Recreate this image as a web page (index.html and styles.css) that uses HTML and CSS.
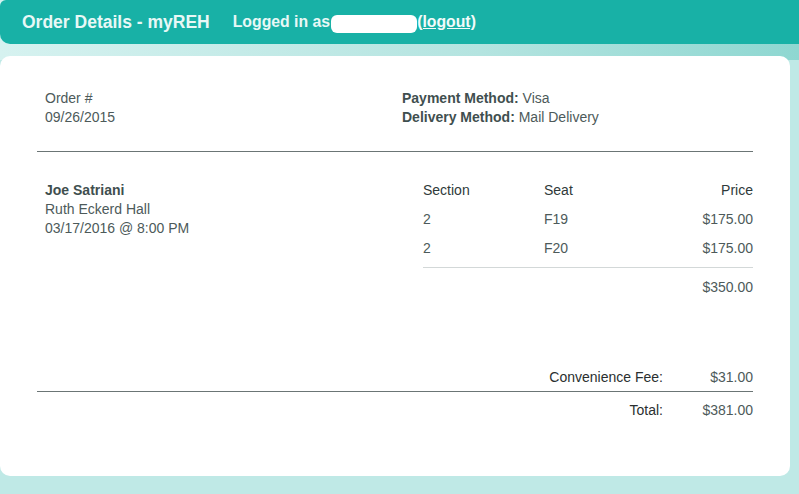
FILE: index.html
```html
<!DOCTYPE html>
<html>
<head>
<meta charset="utf-8">
<title>Order Details - myREH</title>
<link rel="stylesheet" href="styles.css">
</head>
<body>
<div class="page">
  <header class="topbar">
    <span class="title">Order Details - myREH</span>
    <span class="login">Logged in as<span class="redact"></span><a href="#" class="logout">(logout)</a></span>
  </header>
  <main class="card">
    <section class="summary">
      <div class="order-info">
        <div>Order #<span class="order-num"></span></div>
        <div>09/26/2015</div>
      </div>
      <div class="methods">
        <div><b>Payment Method:</b> Visa</div>
        <div><b>Delivery Method:</b> Mail Delivery</div>
      </div>
    </section>
    <hr class="rule">
    <section class="event">
      <div class="event-info">
        <div class="artist">Joe Satriani</div>
        <div>Ruth Eckerd Hall</div>
        <div>03/17/2016 @ 8:00 PM</div>
      </div>
      <div class="tickets">
        <div class="trow thead"><span>Section</span><span>Seat</span><span class="price">Price</span></div>
        <div class="trow"><span>2</span><span>F19</span><span class="price">$175.00</span></div>
        <div class="trow"><span>2</span><span>F20</span><span class="price">$175.00</span></div>
        <div class="subtotal">$350.00</div>
      </div>
    </section>
    <section class="totals">
      <div class="fee-row"><span class="label">Convenience Fee:</span><span class="amount">$31.00</span></div>
      <hr class="rule total-rule">
      <div class="total-row"><span class="label">Total:</span><span class="amount">$381.00</span></div>
    </section>
  </main>
</div>
</body>
</html>
```
FILE: styles.css
```css
html, body {
  margin: 0;
  padding: 0;
}
body {
  background: #bfe9e6;
  font-family: "Liberation Sans", Arial, sans-serif;
  width: 799px;
  height: 494px;
  overflow: hidden;
}
.page {
  background: linear-gradient(90deg, #d6f2f0 0%, #b4e4e0 60%, #8ed7d1 100%) top / 100% 60px no-repeat, #bfe9e6;
  height: 494px;
}
.topbar {
  height: 44px;
  background: #18b1a6;
  border-radius: 6px 0 0 10px;
  display: flex;
  align-items: center;
  padding-left: 22px;
  color: #e8f8f6;
  font-weight: bold;
  box-sizing: border-box;
}
.title {
  font-size: 17.5px;
  margin-right: 23px;
}
.login {
  font-size: 15.8px;
  display: flex;
  align-items: center;
}
.redact {
  display: inline-block;
  width: 86px;
  height: 18px;
  background: #ffffff;
  border-radius: 6px;
  margin-left: 1px;
  margin-top: 4px;
}
.logout {
  color: #f2fbfa;
  text-decoration: underline;
}
.card {
  margin-top: 12px;
  width: 790px;
  height: 420px;
  background: #fff;
  border-radius: 10px;
  box-sizing: border-box;
  padding: 33px 37px 0 37px;
  color: #4d5a5a;
  font-size: 14px;
  line-height: 19px;
}
.card b, .artist {
  font-weight: bold;
  color: #3f4f4f;
}
.summary {
  display: flex;
  padding-left: 8px;
}
.order-info {
  width: 357px;
}
.order-num {
  display: inline-block;
  width: 80px;
}
.rule {
  border: 0;
  border-top: 1px solid #6b7575;
  margin: 24px 0 0 0;
  height: 0;
}
.event {
  display: flex;
  padding-top: 29px;
}
.event-info {
  padding-left: 8px;
  width: 378px;
}
.tickets {
  flex: 1;
}
.trow {
  display: grid;
  grid-template-columns: 121px 1fr auto;
  height: 29px;
}
.thead {
  color: #2f3a3a;
}
.price {
  text-align: right;
}
.subtotal {
  border-top: 1px solid #d3d8d8;
  margin-top: -1px;
  padding-top: 10px;
  text-align: right;
}
.totals {
  margin-top: 71px;
}
.fee-row, .total-row {
  display: flex;
  justify-content: flex-end;
}
.label {
  color: #2a2f2f;
}
.amount {
  width: 90px;
  text-align: right;
}
.total-rule {
  margin: 4px 0 9px 0;
}
```
